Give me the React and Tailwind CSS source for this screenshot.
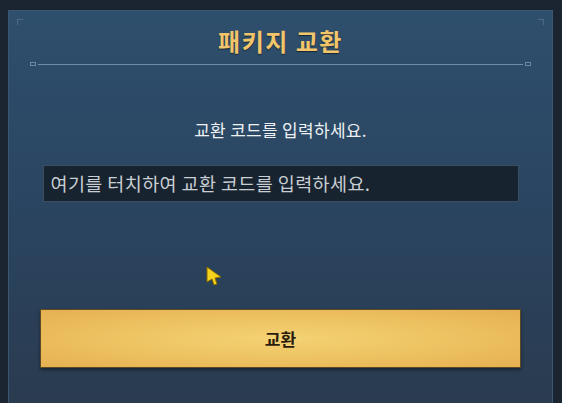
export default function App() {
  const kr = { fontFamily: '"Noto Sans CJK KR", "Noto Sans", sans-serif' };
  return (
    <div className="relative w-[562px] h-[403px] overflow-hidden bg-[#1b2431] pl-[8px] pr-[9px] pt-[10px]" style={kr}>
      <div className="relative h-[420px] border border-[#3a5670] bg-gradient-to-b from-[#2e4f6d] via-[#2a4460] to-[#2a3a4d] flex flex-col items-center">
        {/* corner ornaments */}
        <div className="absolute left-[8px] top-[8px] w-[6px] h-[6px] border-l border-t border-[#4c6a86]" />
        <div className="absolute right-[8px] top-[8px] w-[6px] h-[6px] border-r border-t border-[#4c6a86]" />
        <div className="mt-[15px] h-[30px] leading-[30px] text-[24px] font-bold text-[#f2c56a] tracking-[1.5px] [text-shadow:0_1px_1px_rgba(0,0,0,0.5)]">
          패키지 교환
        </div>
        <div className="mt-[6px] w-full flex items-center px-[21px]">
          <div className="w-[6px] h-[4px] border border-[#6a88a3]" />
          <div className="flex-1 h-[1px] bg-[#6f8ea8] mx-[2px]" />
          <div className="w-[6px] h-[4px] border border-[#6a88a3]" />
        </div>
        <div className="mt-[52px] h-[24px] leading-[24px] text-[17px] text-[#eef1f4] tracking-[0.3px]">
          교환 코드를 입력하세요.
        </div>
        <div className="mt-[23px] w-[476px] h-[37px] bg-[#17232f] border border-[#3b4e60] flex items-center px-[7px]">
          <span className="text-[18.5px] text-[#c9ced3] tracking-[0.4px]">여기를 터치하여 교환 코드를 입력하세요.</span>
        </div>
        <div className="mt-[107px] w-[481px] h-[59px] border border-[#5e4a22] bg-[radial-gradient(ellipse_at_center,#f4d274_0%,#eec463_45%,#e5b052_100%)] flex items-center justify-center shadow-[0_2px_3px_rgba(0,0,0,0.4)]">
          <span className="text-[17px] font-bold text-[#2b1d0e]">교환</span>
        </div>
      </div>
      {/* mouse cursor */}
      <svg className="absolute left-[206px] top-[266px]" width="17" height="20" viewBox="0 0 17 20">
        <path d="M1 1 L15 11 L9 12 L11 18 L8 19 L6 13 L1 16 Z" fill="#f5d21e" stroke="#8a6a00" strokeWidth="1" strokeLinejoin="round" />
      </svg>
    </div>
  );
}
